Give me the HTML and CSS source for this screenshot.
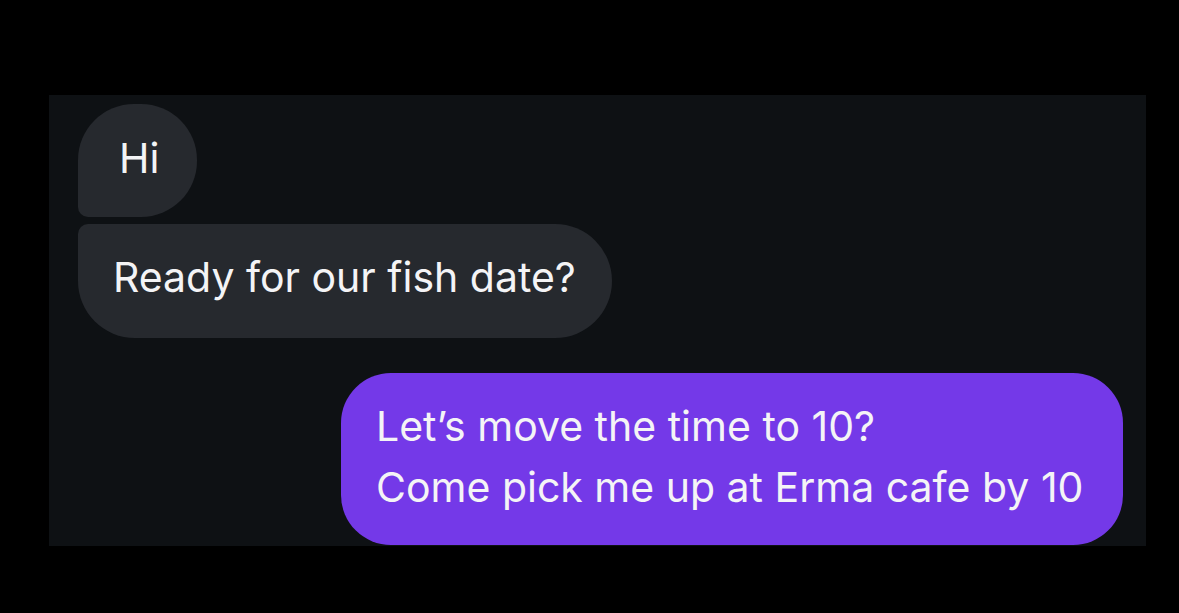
FILE: index.html
```html
<!DOCTYPE html>
<html lang="en">
<head>
    <meta charset="UTF-8">
    <title>Chat</title>
    <link rel="stylesheet" href="styles.css">
</head>
<body>
    <div class="screen">
        <div class="thread">
            <div class="bubble in first hi">Hi</div>
            <div class="bubble in last">Ready for our fish date?</div>
            <div class="bubble out">
                Let’s move the time to 10?<br>
                Come pick me up at Erma cafe by 10
            </div>
        </div>
    </div>
</body>
</html>
```

FILE: styles.css
```css
body {
    margin: 0;
    background-color: #000;
    font-family: 'Inter', 'Roboto', sans-serif;
    color: #f4f4f6;
}

.screen {
    width: 1097px;
    height: 451px;
    margin: 95px 0 0 49px;
    background-color: #0e1114;
    overflow: hidden;
}

.thread {
    display: flex;
    flex-direction: column;
    align-items: flex-start;
    padding: 9px 23px 0 29px;
}

.bubble {
    box-sizing: border-box;
    font-size: 41px;
    display: flex;
    align-items: center;
}

.in {
    background-color: #26292e;
}

.first {
    border-radius: 56px 56px 56px 10px;
}

.last {
    margin-top: 7px;
    border-radius: 10px 57px 57px 57px;
    height: 114px;
    padding: 0 36px 8px 35px;
}

.hi {
    width: 119px;
    height: 113px;
    padding: 0 0 6px 41px;
}

.out {
    align-self: flex-end;
    display: block;
    margin-top: 35px;
    width: 782px;
    height: 172px;
    padding: 23px 0 0 35px;
    line-height: 61px;
    background-color: #7439e8;
    border-radius: 50px;
}
```
